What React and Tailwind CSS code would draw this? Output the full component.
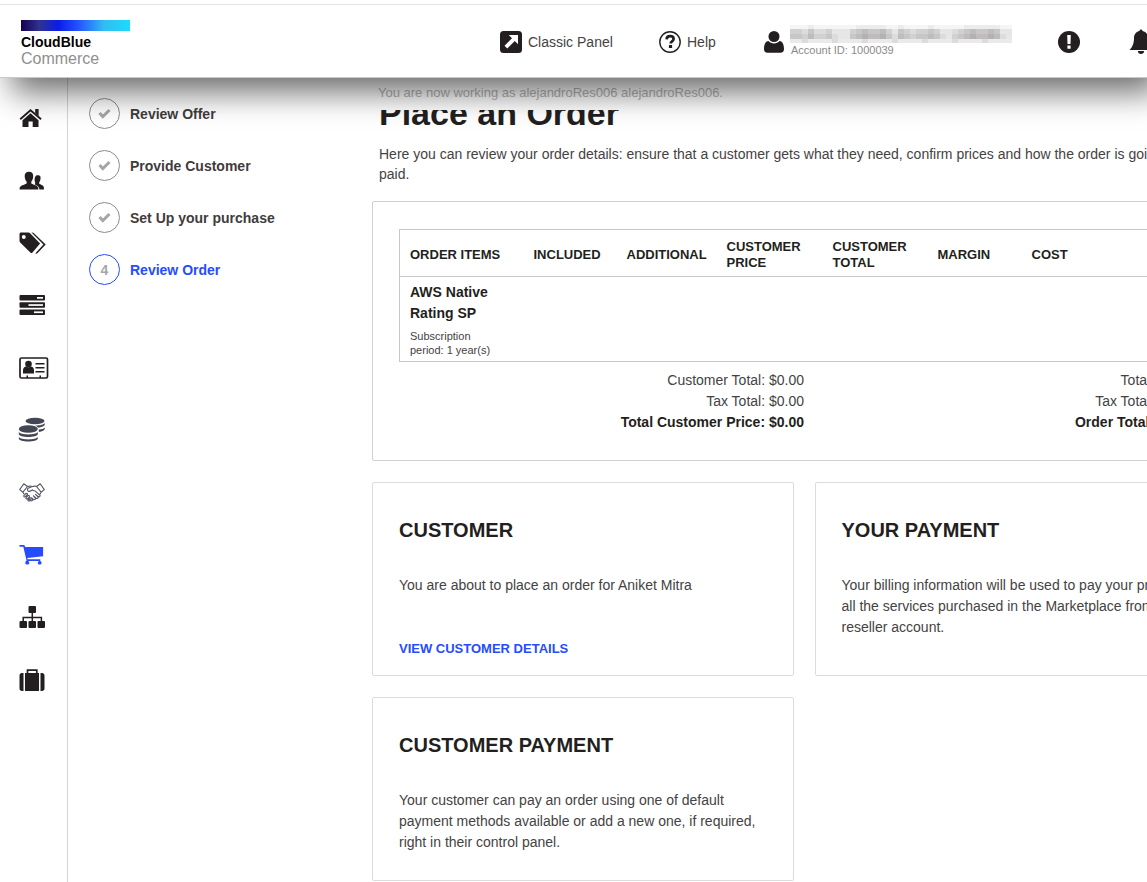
import React from "react";

function HomeIcon() {
  return (
    <svg width="24" height="20" viewBox="0 0 24 20" fill="currentColor" aria-hidden="true">
      <path d="M11.500 5.200 19.500 12.200V19h-5.800v-5.600H9.500V19h-6v-6.800z" />
      <path d="M1.200 11.200 11.500 2.200l10.600 9" fill="none" stroke="currentColor" strokeWidth="1.900" />
      <path d="M16.200 1h3.400v7l-3.400-3z" />
    </svg>
  );
}

function UsersIcon() {
  return (
    <svg width="26" height="20" viewBox="0 0 26 20" fill="currentColor" aria-hidden="true">
      <path d="M17.200 4.600c1-.7 3.600-.7 4.200 1 .5 1.500 0 4.300-1.200 5.900v1.300c2.200 1 4.300 1.700 4.600 3.200l.2 2.500h-4.600c0-2.500-1.900-3.600-3.600-4.500l-1-.6c.3-.9.700-1.400.3-2.100-.7-1.300-.9-5.300 1.100-6.700z" />
      <path d="M10 .8c3 0 4.400 2 4.200 4.700-.1 2.300-.9 4-1.900 5.100v1.900c2.600 1.400 6.500 2.200 6.900 4.200l.2 1.800H0.500l.2-1.800c.4-2 4.300-2.800 6.900-4.200v-1.900c-1-1.100-1.800-2.800-1.900-5.100C5.500 2.800 7 .8 10 .8z" />
    </svg>
  );
}

function TagsIcon() {
  return (
    <svg width="28" height="22" viewBox="0 0 28 22" fill="currentColor" aria-hidden="true">
      <path fillRule="evenodd" d="M2 .5h7.400c.7 0 1.200.3 1.700.7l10 10.300-7.800 9.200c-.5.500-1.200.5-1.700.1L1.200 10.400C.8 9.900.5 9.400.5 8.700V2C.5 1.100 1.100.5 2 .5zM4.800 3a1.900 1.900 0 1 0 0 3.900 1.900 1.900 0 0 0 0-3.900z" />
      <path d="M12.500.6c1.200 0 2 .2 2.700.9L26.700 12.500l-8.300 8.700c-.6.600-1.400.6-2 .1l8-8.800z" />
    </svg>
  );
}

function ServersIcon() {
  return (
    <svg width="26" height="20" viewBox="0 0 26 20" aria-hidden="true">
      <g fill="currentColor">
        <rect x="0.500" width="25.500" height="5.500" rx="1" />
        <rect x="0.500" y="7.200" width="25.500" height="5.500" rx="1" />
        <rect x="0.500" y="14.400" width="25.500" height="5.500" rx="1" />
      </g>
      <g fill="#fff">
        <rect x="18" y="2" width="6" height="1.700" />
        <rect x="9.500" y="9.200" width="14.500" height="1.700" />
        <rect x="15" y="16.400" width="9" height="1.700" />
      </g>
    </svg>
  );
}

function CardIcon() {
  return (
    <svg width="30" height="22" viewBox="0 0 30 22" fill="currentColor" aria-hidden="true">
      <rect x="1" y="1" width="27.500" height="20" rx="1.500" fill="none" stroke="currentColor" strokeWidth="1.700" />
      <circle cx="9.500" cy="7" r="3.300" />
      <path d="M4 16.500v-3.200c0-2.200 1.500-3.700 3.300-3.700.8.800 3.600.8 4.400 0 1.900 0 3.300 1.500 3.300 3.700v3.200z" />
      <path d="M16.500 6h9v1.500h-9zM16.500 10h9v1.500h-9zM16.500 14h9v1.500h-9zM7.500 18.500H9V21H7.500zM20.500 18.500H22V21h-1.500z" />
    </svg>
  );
}

function CoinsIcon() {
  return (
    <svg width="28" height="26" viewBox="0 0 28 26" fill="#444654" className="-ml-px" aria-hidden="true">
      <ellipse cx="17" cy="4" rx="9.500" ry="3.200" />
      <path d="M26.800 6v1.300c0 1.600-2.900 3-6.800 3.400-.5-.9-1.500-1.600-2.700-2.100C22 8.500 26 7.500 26.800 6zM26.800 10.500v1.300c0 1.600-2.500 2.800-6 3.300v-2.500c2.800-.2 5.200-.9 6-2.100z" />
      <ellipse cx="10.300" cy="12" rx="9.500" ry="3.800" />
      <path d="M.8 15c1.600 3.200 17.400 3.200 19 0v2c0 4-19 4-19 0zM.8 20c1.600 3.200 17.400 3.200 19 0v1.600c0 4-19 4-19 0z" />
    </svg>
  );
}

function HandshakeIcon() {
  return (
    <svg width="26" height="20" viewBox="0 0 26 20" fill="none" stroke="#555766" strokeWidth="1.100" strokeLinejoin="round" aria-hidden="true">
      <path d="M4.800.8.7 6.600l3.200 2.600 4.600-5.700zM21.200.8l4.100 5.800-3.200 2.600-4.600-5.700zM8.500 3.500c2-.6 3.500-.4 4.900.1 1.500-.6 2.900-.6 4.100-.1M3.900 9.200l1.200 2M22.100 9.200l-1.500 2.600M13.400 3.600 9 5.300c-1 1.200-.7 2.800.9 3.100 1.500.1 2.500-.9 3.400-1.500 1 1 2 .8 3 1.200l4.500 4c.8 1-.3 2.200-1.500 1.500l-2.700-2.200 2.300 2.500c.6 1.200-.7 2.100-1.900 1.300l-2.500-2.400 1.900 2.500c.3 1.200-1 1.800-2 1.200l-1.800-1.700 1 1.900c0 1-1.100 1.400-2 .9l-2.400-2" />
      <path d="m5 12.400 1.900-1.900c.9-.7 2 .3 1.400 1.200l-1.900 2c-.9.800-2.200-.3-1.400-1.300zM7.200 14.500l1.700-1.800c.9-.7 2 .3 1.400 1.200l-1.700 1.900c-.9.700-2.200-.3-1.400-1.300zM9.200 16.600l1.500-1.600c.9-.7 2 .3 1.400 1.200l-1.500 1.600c-.9.800-2.200-.2-1.400-1.200z" />
    </svg>
  );
}

function CartIcon() {
  return (
    <svg width="26" height="22" viewBox="0 0 26 22" fill="#264cff" aria-hidden="true">
      <path d="M.5 1h4.300c.5 0 .9.300 1 .8L6.100 3h18v9.300L8.300 14l.2 1.200h12.800v1.700H21c1.700 0 2.600 3.700-.3 3.700-2.600 0-2.100-3.300-.5-3.700H9c1.700.4 2 3.700-.7 3.700s-2.400-3.300-.7-3.900L4.300 2.700H.5z" />
    </svg>
  );
}

function SitemapIcon() {
  return (
    <svg width="26" height="22" viewBox="0 0 26 22" fill="currentColor" aria-hidden="true">
      <rect x="9.500" width="7.500" height="7" rx="1" />
      <rect x="0.500" y="15" width="7.500" height="7" rx="1" />
      <rect x="9.500" y="15" width="7.500" height="7" rx="1" />
      <rect x="18.500" y="15" width="7.500" height="7" rx="1" />
      <path d="M4.200 15v-3.600h18.200V15M13.300 7v8" fill="none" stroke="currentColor" strokeWidth="1.500" />
    </svg>
  );
}

function SuitcaseIcon() {
  return (
    <svg width="26" height="22" viewBox="0 0 26 22" fill="currentColor" aria-hidden="true">
      <path d="M6 4h14v18H6zM4.500 4v18H3C1.500 22 .5 21 .5 19.500v-13C.5 5 1.500 4 3 4zM21.500 4v18H23c1.500 0 2.500-1 2.500-2.500v-13C25.500 5 24.500 4 23 4z" />
      <path d="M8.500 4.500V1.200h9.300v3.300" fill="none" stroke="currentColor" strokeWidth="1.700" />
    </svg>
  );
}

function PanelIcon() {
  return (
    <svg width="22" height="22" viewBox="0 0 22 22" className="shrink-0" aria-hidden="true">
      <rect width="22" height="22" rx="3.500" fill="#231f20" />
      <path d="M8.700 4h9.300v9.300l-3.200-3.200-7.500 7.400-2.800-2.700L12 7.300z" fill="#fff" />
    </svg>
  );
}

function HelpIcon() {
  return (
    <svg width="22" height="22" viewBox="0 0 22 22" className="shrink-0" aria-hidden="true">
      <circle cx="11" cy="11" r="10.200" fill="none" stroke="#231f20" strokeWidth="1.400" />
      <path d="M7.600 8.400c.1-2.300 1.500-3.200 3.500-3.200s3.500 1 3.500 2.800c0 2.500-2.900 2.300-2.900 4.500" fill="none" stroke="#231f20" strokeWidth="2.700" />
      <rect x="9.900" y="14" width="3.200" height="3" fill="#231f20" />
    </svg>
  );
}

function UserIcon() {
  return (
    <svg width="22" height="22" viewBox="0 0 22 22" className="shrink-0" fill="#231f20" aria-hidden="true">
      <circle cx="11" cy="5.500" r="5.500" />
      <path d="M5.500 9.900c2.500 3.300 8.500 3.300 11 0 3.300 0 4.500 4.300 4.500 8.100 0 2.500-1.300 3.800-3.500 3.800h-13C2.300 21.800 1 20.500 1 18c0-3.800 1.200-8.100 4.500-8.100z" />
    </svg>
  );
}

function AlertIcon() {
  return (
    <svg width="22" height="22" viewBox="0 0 22 22" aria-hidden="true">
      <circle cx="11" cy="11" r="11" fill="#231f20" />
      <path d="M9.200 4h3.600l-.3 9H9.500zM9.400 14.500h3.200v3.200H9.400z" fill="#fff" />
    </svg>
  );
}

function BellIcon() {
  return (
    <svg width="24" height="26" viewBox="0 0 24 26" fill="#231f20" aria-hidden="true">
      <path d="M12 .5c.9 0 1.500.7 1.500 1.500C17 2.700 19 5.400 19 9c0 6 2 9.500 4.500 12H.5C3 18.500 5 15 5 9c0-3.600 2-6.300 5.500-7 0-.8.600-1.500 1.500-1.500zM8.800 22h6.400c0 4-6.400 4-6.400 0z" />
    </svg>
  );
}

const maskTones = "4435334211456556425434454213456556521".split("");
const maskFills = ["#e6e6e6", "#dcdcdc", "#d2d1d1", "#c8c6c6", "#bebcbc", "#b4b1b1", "#aaa7a7"];

function MaskedName() {
  return (
    <svg width="222" height="18" viewBox="0 0 222 18" className="-ml-px" role="img" aria-label="Hidden account name">
      {maskTones.map((t, i) => (
        <g key={i} transform={`translate(${i * 6} 0)`}>
          <rect width="6" height="4" fill={Number(t) > 4 ? "#ececec" : "#f5f5f5"} />
          <rect y="4" width="6" height="5" fill={maskFills[Math.max(0, Number(t) - 2)]} />
          <rect y="9" width="6" height="5" fill={maskFills[Number(t) - 1]} />
          <rect y="14" width="6" height="4" fill={i % 5 === 2 ? "#dcdcdc" : "#eaeaea"} />
        </g>
      ))}
    </svg>
  );
}

const menu = [
  ["Home", HomeIcon],
  ["Customers", UsersIcon],
  ["Products", TagsIcon],
  ["Operations", ServersIcon],
  ["Account", CardIcon],
  ["Billing", CoinsIcon],
  ["Partners", HandshakeIcon],
  ["Marketplace", CartIcon],
  ["Organization", SitemapIcon],
  ["Business", SuitcaseIcon],
];

const steps = ["Review Offer", "Provide Customer", "Set Up your purchase", "Review Order"];

const columns = [
  ["ORDER ITEMS", "w-[124px]"],
  ["INCLUDED", "w-[93px]"],
  ["ADDITIONAL", "w-[100px]"],
  ["CUSTOMER PRICE", "w-[106px]"],
  ["CUSTOMER TOTAL", "w-[105px]"],
  ["MARGIN", "w-[94px]"],
  ["COST", ""],
];

function Header() {
  return (
    <header className="relative z-10 flex h-[78px] shrink-0 items-center border-b border-[#c8c8c8] bg-white pt-[6px] shadow-[12px_14px_32px_rgba(0,0,0,0.58)]">
      <div className="absolute inset-x-0 top-1 h-px bg-[#e2e2e2]" />
      <a href="#home" className="ml-[21px] block w-[109px] shrink-0 pt-0.5">
        <span className="block h-[11px] bg-[linear-gradient(90deg,#16004f_0%,#2f3390_17%,#0a1cea_34%,#2450ff_52%,#30bdf2_76%,#1cdcfb_100%)]" />
        <span className="mt-1 block text-[14px] leading-[14px] font-bold text-black">CloudBlue<span className="text-[6px] font-normal text-[#888]">.</span></span>
        <span className="block text-base leading-[14px] text-[#8f8f8f]">Commerce</span>
      </a>
      <nav className="ml-[370px] flex shrink-0 items-center text-sm text-[#454243]">
        <a href="#classic" className="flex w-[159px] items-center gap-[6px]"><PanelIcon />Classic Panel</a>
        <a href="#help" className="flex w-[104px] items-center gap-[6px]"><HelpIcon />Help</a>
        <button type="button" className="flex w-[295px] items-center gap-[6px] text-left">
          <UserIcon />
          <span className="block pb-0.5">
            <MaskedName />
            <span className="block text-[11px] leading-[14px] text-[#8a8a8a]">Account ID: 1000039</span>
          </span>
        </button>
        <button type="button" aria-label="Alerts" className="w-[70px]"><AlertIcon /></button>
        <button type="button" aria-label="Notifications" className="pl-px"><BellIcon /></button>
      </nav>
    </header>
  );
}

function Card({ title, children }) {
  return (
    <section className="rounded-xs border border-[#dcdcdc] px-[26px] pt-[33px]">
      <h2 className="text-xl leading-7 font-bold text-[#231f20]">{title}</h2>
      <div className="mt-[31px] text-sm leading-[21px]">{children}</div>
    </section>
  );
}

export default function App() {
  return (
    <div className="flex h-screen min-h-[600px] flex-col overflow-hidden bg-white font-['Liberation_Sans',Arial,sans-serif] text-[#454243]">
      <Header />
      <div className="flex min-h-0 grow">
        <nav aria-label="Main menu" className="w-[68px] shrink-0 border-r border-[#d4d4d4] pt-[9px] text-[#231f20]">
          <ul className="flex h-[624px] flex-col">
            {menu.map(([label, Icon]) => (
              <li key={label} className="flex flex-1 items-center">
                <a href={"#" + label.toLowerCase()} aria-label={label} className="flex w-full items-center pl-[19px]"><Icon /></a>
              </li>
            ))}
          </ul>
        </nav>
        <ol className="flex w-[303px] shrink-0 flex-col gap-[21px] pt-5 pl-[21px]">
          {steps.map((s, i) => (
            <li key={s} className={"flex items-center gap-[10px] text-sm font-bold " + (i === 3 ? "text-[#264cff]" : "text-[#3f3c3d]")}>
              <span className={"flex size-[31px] items-center justify-center rounded-full border text-[#a6a6a6] " + (i === 3 ? "border-[#264cff]" : "border-[#8c8c8c]")}>
                {i === 3 ? "4" : (
                  <svg width="13" height="11" viewBox="0 0 13 11" fill="none" stroke="#a6a6a6" strokeWidth="3" aria-label="Done">
                    <path d="m1.500 5 3.300 3.500 6.700-6.500" />
                  </svg>
                )}
              </span>
              {s}
            </li>
          ))}
        </ol>
        <main className="w-[865px] shrink-0">
          <p className="pt-[6px] pl-[7px] text-[13px] leading-[18px] text-[#b4b4b4]">You are now working as alejandroRes006 alejandroRes006.</p>
          <div className="mt-2 flex h-5 items-end overflow-hidden pl-2">
            <h1 className="text-[34px] leading-[34px] font-bold text-[#231f20]">Place an Order</h1>
          </div>
          <p className="mt-[14px] pr-2 pl-2 text-sm leading-5">Here you can review your order details: ensure that a customer gets what they need, confirm prices and how the order is going to be paid.</p>
          <section className="mt-[17px] ml-px rounded-xs border border-[#d0d0d0] px-[26px] py-[27px]">
            <table className="w-full table-fixed border border-[#c8c8c8] text-left">
              <thead>
                <tr className="h-[47px] border-b border-[#c8c8c8]">
                  {columns.map(([c, w]) => (
                    <th key={c} className={"pt-1 pr-2 pl-[10px] text-[13px] leading-4 font-bold text-[#231f20] " + w}>{c}</th>
                  ))}
                </tr>
              </thead>
              <tbody>
                <tr>
                  <td className="pt-[5px] pb-1 pl-[10px]">
                    <p className="w-[90px] text-sm leading-[21px] font-bold text-[#231f20]">AWS Native Rating SP</p>
                    <p className="mt-[5px] w-[90px] text-[11px] leading-[14px]">Subscription period: 1 year(s)</p>
                  </td>
                  <td colSpan={6} />
                </tr>
              </tbody>
            </table>
            <div className="mt-2 grid grid-cols-2 text-right text-sm leading-[21px]">
              <div>
                <p>Customer Total: $0.00</p>
                <p>Tax Total: $0.00</p>
                <p className="font-bold text-[#231f20]">Total Customer Price: $0.00</p>
              </div>
              <div className="pr-4">
                <p>Total: $0.00</p>
                <p>Tax Total: $0.00</p>
                <p className="font-bold text-[#231f20]">Order Total: $0.00</p>
              </div>
            </div>
          </section>
          <div className="mt-[21px] ml-px grid grid-cols-2 grid-rows-[194px_184px] gap-[21px]">
            <Card title="CUSTOMER">
              <p>You are about to place an order for Aniket Mitra</p>
              <a href="#customer" className="mt-[42px] inline-block text-[13px] font-bold text-[#264cff]">VIEW CUSTOMER DETAILS</a>
            </Card>
            <Card title="YOUR PAYMENT">
              <p>Your billing information will be used to pay your provider for all the services purchased in the Marketplace from your reseller account.</p>
            </Card>
            <Card title="CUSTOMER PAYMENT">
              <p>Your customer can pay an order using one of default payment methods available or add a new one, if required, right in their control panel.</p>
            </Card>
          </div>
        </main>
      </div>
    </div>
  );
}
